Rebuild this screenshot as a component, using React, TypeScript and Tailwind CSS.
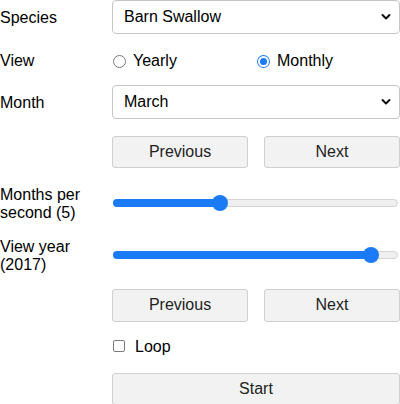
import React, { useState } from 'react';

const FONT = { fontFamily: '"Liberation Sans", Arial, sans-serif' };

// small chevron used by the fake selects
const Chevron = () => (
  <svg width="10" height="7" viewBox="0 0 10 7" className="absolute right-[8px] top-1/2 -translate-y-1/2">
    <path d="M1.5 1.5 L5 5 L8.5 1.5" fill="none" stroke="#111" strokeWidth="2" strokeLinecap="round" strokeLinejoin="round" />
  </svg>
);

const Select: React.FC<{ value: string }> = ({ value }) => (
  <div className="relative h-[34px] w-full rounded-[4px] border border-[#c6c6c6] bg-white pl-[11px] pt-[1px] flex items-center text-[16px] text-black">
    {value}
    <Chevron />
  </div>
);

const Radio: React.FC<{ checked: boolean; label: string; onClick: () => void }> = ({ checked, label, onClick }) => (
  <div className="flex items-center cursor-pointer" onClick={onClick}>
    {checked ? (
      <span className="ml-[1px] w-[13px] h-[13px] rounded-full bg-[#1b7af5] flex items-center justify-center">
        <span className="w-[11px] h-[11px] rounded-full bg-white flex items-center justify-center">
          <span className="w-[7px] h-[7px] rounded-full bg-[#1b7af5]" />
        </span>
      </span>
    ) : (
      <span className="ml-[1px] w-[13px] h-[13px] rounded-full border border-[#7a7a7a] bg-white" />
    )}
    <span className="ml-[7px]">{label}</span>
  </div>
);

const Btn: React.FC<{ children: React.ReactNode; className?: string }> = ({ children, className }) => (
  <button className={`h-[32px] rounded-[3px] border border-[#cfcfcf] bg-[#f2f2f2] pt-[1px] text-[16px] text-[#222] ${className ?? ''}`}>
    {children}
  </button>
);

const Slider: React.FC<{ pct: number }> = ({ pct }) => (
  <div className="relative h-[16px] w-full flex items-center">
    <div className="h-[8px] w-full rounded-full border border-[#d4d4d4] bg-[#efefef]" />
    <div className="absolute left-0 h-[8px] rounded-full bg-[#1b7af5]" style={{ width: `${pct}%` }} />
    <div
      className="absolute w-[16px] h-[16px] rounded-full bg-[#1b7af5] -translate-x-1/2"
      style={{ left: `${pct}%` }}
    />
  </div>
);

const App: React.FC = () => {
  const [view, setView] = useState<'yearly' | 'monthly'>('monthly');

  return (
    <div className="w-[400px] h-[404px] bg-white text-[16px] leading-[18.4px] text-black" style={FONT}>
      {/* Species */}
      <div className="flex items-center">
        <div className="w-[112px] relative top-[1px]">Species</div>
        <div className="flex-1"><Select value="Barn Swallow" /></div>
      </div>

      {/* View */}
      <div className="flex items-center h-[20px] mt-[16px]">
        <div className="w-[112px] relative top-[1px]">View</div>
        <div className="flex-1 grid grid-cols-2 relative top-[1px]">
          <Radio checked={view === 'yearly'} label="Yearly" onClick={() => setView('yearly')} />
          <Radio checked={view === 'monthly'} label="Monthly" onClick={() => setView('monthly')} />
        </div>
      </div>

      {/* Month */}
      <div className="flex items-center mt-[15px]">
        <div className="w-[112px] relative top-[1px]">Month</div>
        <div className="flex-1"><Select value="March" /></div>
      </div>

      <div className="flex mt-[17px] pl-[112px] gap-[16px]">
        <Btn className="flex-1">Previous</Btn>
        <Btn className="flex-1">Next</Btn>
      </div>

      <div className="flex items-center mt-[17px]">
        <div className="w-[112px] relative top-[1px]">Months per<br />second (5)</div>
        <div className="flex-1 pl-[1px] pr-[2px]"><Slider pct={37.5} /></div>
      </div>

      <div className="flex items-center mt-[15px]">
        <div className="w-[112px] relative top-[1px]">View year<br />(2017)</div>
        <div className="flex-1 pl-[1px] pr-[2px]"><Slider pct={90.5} /></div>
      </div>

      <div className="flex mt-[15px] pl-[112px] gap-[16px]">
        <Btn className="flex-1 h-[33px]">Previous</Btn>
        <Btn className="flex-1 h-[33px]">Next</Btn>
      </div>

      <div className="flex items-center h-[20px] mt-[14px] pl-[112px]">
        <span className="ml-[1px] w-[12px] h-[12px] rounded-[2px] border border-[#7a7a7a] bg-white" />
        <span className="ml-[10px] relative top-[2px]">Loop</span>
      </div>

      <div className="flex mt-[17px] pl-[112px]">
        <Btn className="flex-1">Start</Btn>
      </div>
    </div>
  );
};

export default App;
